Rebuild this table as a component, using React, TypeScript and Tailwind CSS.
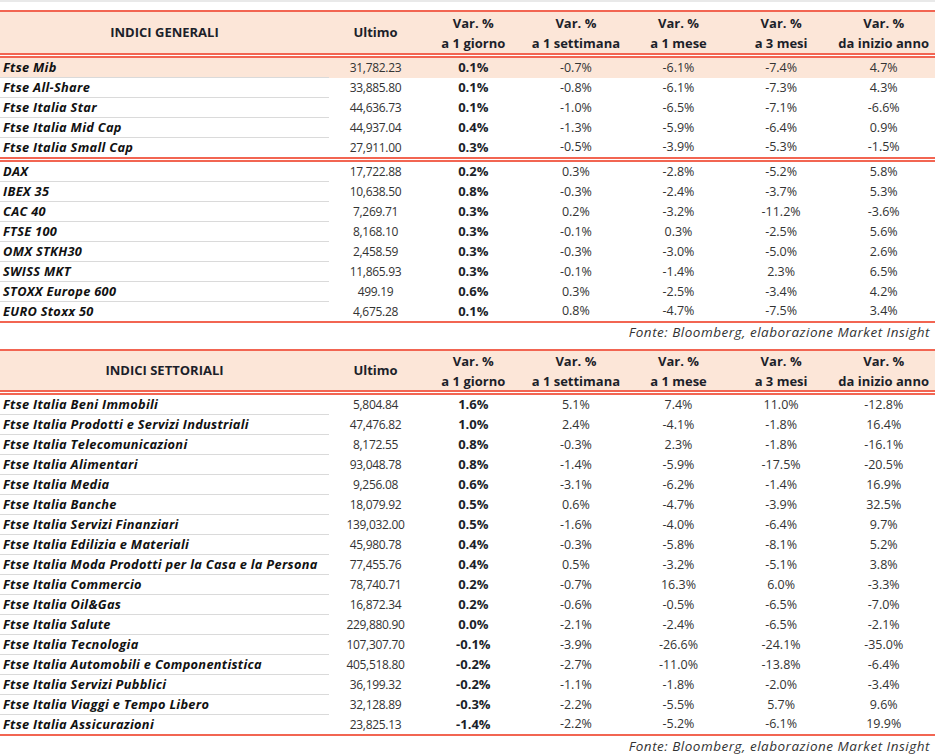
import React from "react";

type Row = [string, string, string, string, string, string, string];

const groupA: Row[] = [
  ["Ftse Mib", "31,782.23", "0.1%", "-0.7%", "-6.1%", "-7.4%", "4.7%"],
  ["Ftse All-Share", "33,885.80", "0.1%", "-0.8%", "-6.1%", "-7.3%", "4.3%"],
  ["Ftse Italia Star", "44,636.73", "0.1%", "-1.0%", "-6.5%", "-7.1%", "-6.6%"],
  ["Ftse Italia Mid Cap", "44,937.04", "0.4%", "-1.3%", "-5.9%", "-6.4%", "0.9%"],
  ["Ftse Italia Small Cap", "27,911.00", "0.3%", "-0.5%", "-3.9%", "-5.3%", "-1.5%"],
];

const groupB: Row[] = [
  ["DAX", "17,722.88", "0.2%", "0.3%", "-2.8%", "-5.2%", "5.8%"],
  ["IBEX 35", "10,638.50", "0.8%", "-0.3%", "-2.4%", "-3.7%", "5.3%"],
  ["CAC 40", "7,269.71", "0.3%", "0.2%", "-3.2%", "-11.2%", "-3.6%"],
  ["FTSE 100", "8,168.10", "0.3%", "-0.1%", "0.3%", "-2.5%", "5.6%"],
  ["OMX STKH30", "2,458.59", "0.3%", "-0.3%", "-3.0%", "-5.0%", "2.6%"],
  ["SWISS MKT", "11,865.93", "0.3%", "-0.1%", "-1.4%", "2.3%", "6.5%"],
  ["STOXX Europe 600", "499.19", "0.6%", "0.3%", "-2.5%", "-3.4%", "4.2%"],
  ["EURO Stoxx 50", "4,675.28", "0.1%", "0.8%", "-4.7%", "-7.5%", "3.4%"],
];

const groupC: Row[] = [
  ["Ftse Italia Beni Immobili", "5,804.84", "1.6%", "5.1%", "7.4%", "11.0%", "-12.8%"],
  ["Ftse Italia Prodotti e Servizi Industriali", "47,476.82", "1.0%", "2.4%", "-4.1%", "-1.8%", "16.4%"],
  ["Ftse Italia Telecomunicazioni", "8,172.55", "0.8%", "-0.3%", "2.3%", "-1.8%", "-16.1%"],
  ["Ftse Italia Alimentari", "93,048.78", "0.8%", "-1.4%", "-5.9%", "-17.5%", "-20.5%"],
  ["Ftse Italia Media", "9,256.08", "0.6%", "-3.1%", "-6.2%", "-1.4%", "16.9%"],
  ["Ftse Italia Banche", "18,079.92", "0.5%", "0.6%", "-4.7%", "-3.9%", "32.5%"],
  ["Ftse Italia Servizi Finanziari", "139,032.00", "0.5%", "-1.6%", "-4.0%", "-6.4%", "9.7%"],
  ["Ftse Italia Edilizia e Materiali", "45,980.78", "0.4%", "-0.3%", "-5.8%", "-8.1%", "5.2%"],
  ["Ftse Italia Moda Prodotti per la Casa e la Persona", "77,455.76", "0.4%", "0.5%", "-3.2%", "-5.1%", "3.8%"],
  ["Ftse Italia Commercio", "78,740.71", "0.2%", "-0.7%", "16.3%", "6.0%", "-3.3%"],
  ["Ftse Italia Oil&Gas", "16,872.34", "0.2%", "-0.6%", "-0.5%", "-6.5%", "-7.0%"],
  ["Ftse Italia Salute", "229,880.90", "0.0%", "-2.1%", "-2.4%", "-6.5%", "-2.1%"],
  ["Ftse Italia Tecnologia", "107,307.70", "-0.1%", "-3.9%", "-26.6%", "-24.1%", "-35.0%"],
  ["Ftse Italia Automobili e Componentistica", "405,518.80", "-0.2%", "-2.7%", "-11.0%", "-13.8%", "-6.4%"],
  ["Ftse Italia Servizi Pubblici", "36,199.32", "-0.2%", "-1.1%", "-1.8%", "-2.0%", "-3.4%"],
  ["Ftse Italia Viaggi e Tempo Libero", "32,128.89", "-0.3%", "-2.2%", "-5.5%", "5.7%", "9.6%"],
  ["Ftse Italia Assicurazioni", "23,825.13", "-1.4%", "-2.2%", "-5.2%", "-6.1%", "19.9%"],
];

const GRID = "grid grid-cols-[329px_93px_repeat(5,minmax(0,1fr))]";

function RedLine() {
  return <div className="h-[2px] bg-[#f26552]" />;
}

function DoubleLine() {
  return (
    <div className="flex flex-col">
      <div className="h-[2px] bg-[#f26552]" />
      <div className="h-[1px] bg-white" />
      <div className="h-[2px] bg-[#f26552]" />
    </div>
  );
}

function Header({ title, h }: { title: string; h: string }) {
  const sub = ["a 1 settimana", "a 1 mese", "a 3 mesi", "da inizio anno"];
  return (
    <div className={`${GRID} ${h} bg-[#fce6d8] text-[13px] font-bold text-[#1c1f2a]`}>
      <div className="flex items-center justify-center">{title}</div>
      <div className="flex items-center justify-center">Ultimo</div>
      <div className="flex flex-col items-center justify-center leading-[20px]">
        <span>Var. %</span>
        <span>a 1 giorno</span>
      </div>
      {sub.map((s) => (
        <div key={s} className="flex flex-col items-center justify-center leading-[20px]">
          <span>Var. %</span>
          <span>{s}</span>
        </div>
      ))}
    </div>
  );
}

function DataRow({ r, last, hl }: { r: Row; last: boolean; hl?: boolean }) {
  return (
    <div className={`${GRID} ${last ? "h-[19px]" : "h-[20px]"} ${hl ? "bg-[#fce6d8]" : ""}`}>
      <div
        className={`flex items-center pl-[3px] text-[12.8px] tracking-[0.3px] font-bold italic text-[#111] whitespace-nowrap ${
          last ? "" : "border-b border-[#dadada]"
        }`}
      >
        {r[0]}
      </div>
      <div className="flex items-center justify-center text-[12px] tracking-[-0.3px] text-[#333]">{r[1]}</div>
      <div className="flex items-center justify-center text-[13px] font-bold text-[#1c1f2a]">{r[2]}</div>
      {r.slice(3).map((v, i) => (
        <div key={i} className="flex items-center justify-center text-[12.5px] text-[#333]">
          {v}
        </div>
      ))}
    </div>
  );
}

function Fonte({ h, top }: { h: string; top?: boolean }) {
  return (
    <div
      className={`${h} flex ${top ? "items-start" : "items-center"} justify-end pr-[5px] text-[13.5px] tracking-[0.5px] leading-[19px] italic text-[#333]`}
    >
      Fonte: Bloomberg, elaborazione Market Insight
    </div>
  );
}

export default function App() {
  return (
    <div
      className="w-[935px] h-[756px] overflow-hidden bg-white"
      style={{ fontFamily: '"Open Sans", "DejaVu Sans", sans-serif' }}
    >
      <div className="h-[2px] bg-[#e9e9e9]" />
      <div className="h-[8px]" />
      <RedLine />
      <Header title="INDICI GENERALI" h="h-[41px]" />
      <DoubleLine />
      {groupA.map((r, i) => (
        <DataRow key={r[0]} r={r} last={i === groupA.length - 1} hl={i === 0} />
      ))}
      <DoubleLine />
      {groupB.map((r, i) => (
        <DataRow key={r[0]} r={r} last={i === groupB.length - 1} />
      ))}
      <RedLine />
      <Fonte h="h-[26px]" top />
      <RedLine />
      <Header title="INDICI SETTORIALI" h="h-[39px]" />
      <DoubleLine />
      {groupC.map((r, i) => (
        <DataRow key={r[0]} r={r} last={i === groupC.length - 1} />
      ))}
      <RedLine />
      <Fonte h="h-[20px]" />
    </div>
  );
}
